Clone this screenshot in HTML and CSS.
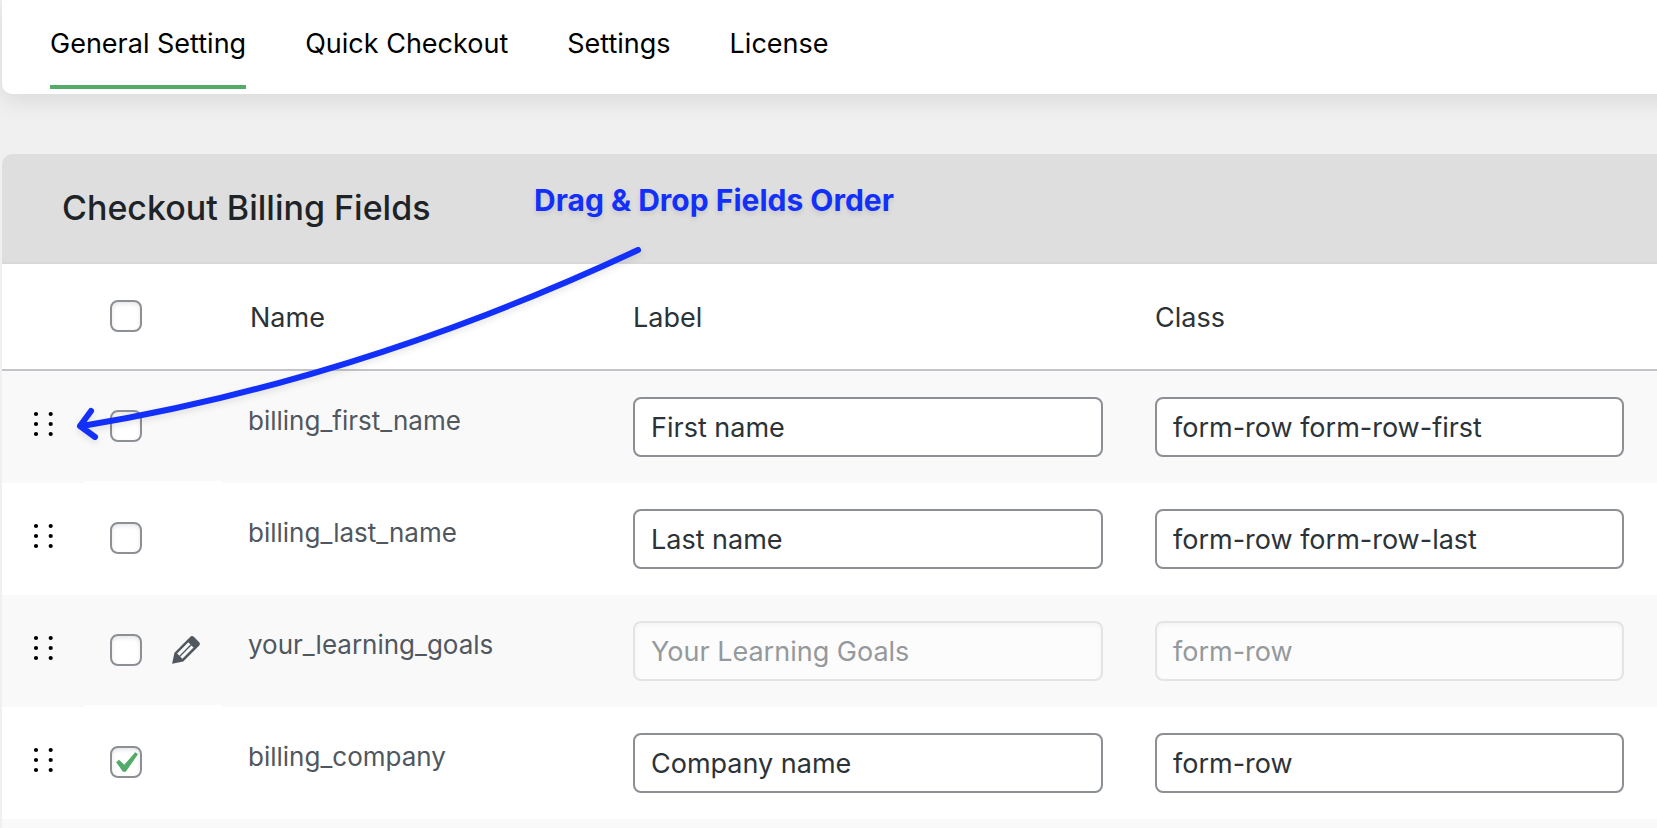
FILE: index.html
```html
<!DOCTYPE html>
<html lang="en">
<head>
    <meta charset="UTF-8">
    <meta name="viewport" content="width=device-width, initial-scale=1.0">
    <title>Checkout Billing Fields</title>
    <link rel="stylesheet" href="styles.css">
</head>
<body>
<svg class="sprite" aria-hidden="true">
    <symbol id="grip" viewBox="0 0 20 26">
        <circle cx="3" cy="3" r="2.1"/><circle cx="17.7" cy="3" r="2.1"/>
        <circle cx="3" cy="13" r="2.1"/><circle cx="17.7" cy="13" r="2.1"/>
        <circle cx="3" cy="23" r="2.1"/><circle cx="17.7" cy="23" r="2.1"/>
    </symbol>
</svg>

<nav class="tabs">
    <a class="tab active" href="#general">General Setting</a>
    <a class="tab" href="#quick">Quick Checkout</a>
    <a class="tab" href="#settings">Settings</a>
    <a class="tab" href="#license">License</a>
</nav>

<main class="card">
    <h2 class="card-title">Checkout Billing Fields</h2>
    <table class="fields">
        <colgroup>
            <col class="col-drag">
            <col class="col-check">
            <col class="col-name">
            <col class="col-label">
            <col class="col-class">
        </colgroup>
        <thead>
            <tr>
                <td></td>
                <td class="check"><div class="tools"><input type="checkbox" aria-label="Select all"></div></td>
                <th>Name</th>
                <th class="field">Label</th>
                <th class="field">Class</th>
            </tr>
        </thead>
        <tbody>
            <tr>
                <td class="drag"><svg class="grip"><use href="#grip"/></svg></td>
                <td class="check"><div class="tools"><input type="checkbox" aria-label="Select billing_first_name"></div></td>
                <td class="name">billing_first_name</td>
                <td class="field"><input type="text" aria-label="Label" value="First name"></td>
                <td class="field"><input type="text" aria-label="Class" value="form-row form-row-first"></td>
            </tr>
            <tr>
                <td class="drag"><svg class="grip"><use href="#grip"/></svg></td>
                <td class="check"><div class="tools"><input type="checkbox" aria-label="Select billing_last_name"></div></td>
                <td class="name">billing_last_name</td>
                <td class="field"><input type="text" aria-label="Label" value="Last name"></td>
                <td class="field"><input type="text" aria-label="Class" value="form-row form-row-last"></td>
            </tr>
            <tr>
                <td class="drag"><svg class="grip"><use href="#grip"/></svg></td>
                <td class="check">
                    <div class="tools">
                        <input type="checkbox" aria-label="Select your_learning_goals">
                        <button class="edit" type="button" aria-label="Edit field">
                            <svg viewBox="0 0 20 20"><path d="M13.89 3.39l2.71 2.72c.46.46.42 1.24.03 1.64l-8.01 8.02-5.56 1.16 1.16-5.58s7.6-7.63 7.99-8.03c.39-.39 1.22-.39 1.68.07zm-2.73 2.79l-5.59 5.61 1.11 1.11 5.54-5.65zm-2.97 8.23l5.58-5.6-1.07-1.08-5.59 5.6z"/></svg>
                        </button>
                    </div>
                </td>
                <td class="name">your_learning_goals</td>
                <td class="field"><input type="text" aria-label="Label" value="Your Learning Goals" disabled></td>
                <td class="field"><input type="text" aria-label="Class" value="form-row" disabled></td>
            </tr>
            <tr>
                <td class="drag"><svg class="grip"><use href="#grip"/></svg></td>
                <td class="check"><div class="tools"><input type="checkbox" aria-label="Select billing_company" checked></div></td>
                <td class="name">billing_company</td>
                <td class="field"><input type="text" aria-label="Label" value="Company name"></td>
                <td class="field"><input type="text" aria-label="Class" value="form-row"></td>
            </tr>
        </tbody>
    </table>

    <!-- hint drawn over the table -->
    <p class="hint">Drag &amp; Drop Fields Order</p>
    <svg class="hint-arrow" viewBox="0 0 580 210" aria-hidden="true">
        <path d="M566 16Q288 146 10 192M19 177L8 192L23 203"/>
    </svg>
</main>
</body>
</html>
```
FILE: styles.css
```css
* {
    box-sizing: border-box;
}
body {
    margin: 0;
    padding-left: 2px;
    min-height: 100vh;
    display: flex;
    flex-direction: column;
    gap: 60px;
    overflow-x: hidden;
    background-color: #f0f0f0;
    color: #2c3338;
    font-family: Inter, sans-serif;
    font-size: 27px;
}
.sprite {
    position: absolute;
    width: 0;
    height: 0;
}

/* tabs */
.tabs {
    display: flex;
    gap: 59px;
    height: 94px;
    margin-right: -24px;
    padding: 0 48px 5px;
    background-color: #fff;
    border-radius: 0 0 0 10px;
    box-shadow: 0 6px 24px rgba(0,0,0,0.1);
}
.tab {
    padding-top: 27px;
    line-height: 34px;
    color: #000;
    text-decoration: none;
    border-bottom: 4px solid transparent;
}
.tab.active {
    border-bottom-color: #53ab68;
}

/* card */
.card {
    position: relative;
    flex: 1;
    background-color: #f9f9f9;
    border-radius: 10px 0 0 0;
}
.card-title {
    margin: 0;
    padding: 32px 60px;
    background-color: #dedede;
    border-bottom: 2px solid #d9d9d9;
    border-radius: 10px 0 0 0;
    color: #1d2327;
    font-size: 34px;
    font-weight: 500;
    line-height: 44px;
}

/* table */
.fields {
    width: 100%;
    table-layout: fixed;
    border-collapse: separate;
    border-spacing: 0;
}
.col-drag {
    width: 82px;
}
.col-check {
    width: 138px;
}
.col-name {
    width: 385px;
}
.col-label {
    width: 522px;
}
.fields td,
.fields th {
    padding: 0;
    text-align: left;
    font-weight: 400;
}
.fields thead td,
.fields thead th {
    height: 107px;
    background-color: #fff;
    border-bottom: 2px solid #c3c4c7;
}
.fields thead th {
    padding-top: 2px;
    padding-left: 28px;
}
.fields tbody td {
    height: 112px;
    background-color: #f9f9f9;
}
.fields tbody tr:nth-child(even) td {
    background-color: #fff;
}
.fields tbody tr:nth-child(even) .check {
    box-shadow: 0 -2px #fff;
}
.fields .check {
    padding: 0 0 2px 26px;
}
.fields .drag {
    padding: 0 0 6px 31px;
}
.fields .name {
    padding: 0 0 14px 26px;
    color: #50575e;
    font-size: 26px;
}
.fields .field {
    padding-left: 26px;
    padding-right: 26px;
}
.fields .field:last-child {
    padding-right: 33px;
}
.tools {
    display: flex;
    align-items: center;
    gap: 24px;
}
.grip {
    display: block;
    width: 20px;
    height: 26px;
}
.edit {
    width: 40px;
    height: 40px;
    margin: 0;
    padding: 0;
    border: none;
    background: none;
    cursor: pointer;
}
.edit svg {
    display: block;
    fill: #50575e;
}
input[type="checkbox"] {
    appearance: none;
    width: 32px;
    height: 32px;
    margin: 0;
    border: 2px solid #8c8f94;
    border-radius: 8px;
    background-color: #fff;
    box-shadow: inset 0 2px 4px rgba(0,0,0,0.1);
}
input[type="checkbox"]:checked {
    background-image: url("data:image/svg+xml,%3Csvg xmlns='http://www.w3.org/2000/svg' viewBox='0 0 20 20'%3E%3Cpath d='M14.83 4.89l1.34.94-5.81 8.38H9.02L5.78 9.67l1.34-1.25 2.57 2.4z' fill='%2353ab68'/%3E%3C/svg%3E");
    background-repeat: no-repeat;
    background-size: 42px 42px;
    background-position: -8px -6px;
}
input[type="text"] {
    display: block;
    width: 100%;
    height: 60px;
    padding: 0 16px;
    border: 2px solid #8c8f94;
    border-radius: 8px;
    background-color: #fff;
    color: #2c3338;
    font-family: inherit;
    font-size: 27px;
}
input[type="text"]:disabled {
    background-color: #fcfcfc;
    border-color: #e3e4e5;
    color: #95999c;
    box-shadow: inset 0 2px 4px rgba(0,0,0,0.04);
}

/* hint */
.hint {
    position: absolute;
    left: 532px;
    top: 28px;
    margin: 0;
    color: #1230fa;
    font-size: 30px;
    font-weight: 700;
    line-height: 36px;
    white-space: nowrap;
    text-shadow: 0 3px 5px rgba(0,0,0,0.1);
}
.hint-arrow {
    position: absolute;
    left: 70px;
    top: 80px;
    width: 580px;
    height: 210px;
    fill: none;
    stroke: #1230fa;
    stroke-width: 6;
    stroke-linecap: round;
    stroke-linejoin: round;
    filter: drop-shadow(0 3px 3px rgba(0,0,0,0.1));
    pointer-events: none;
}
```
